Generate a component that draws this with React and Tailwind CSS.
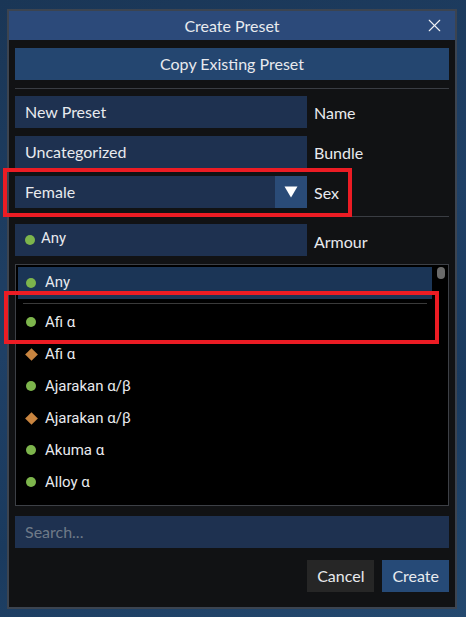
import { X } from "lucide-react";

const items = [
  { name: "Afi α", kind: "dot" },
  { name: "Afi α", kind: "diamond" },
  { name: "Ajarakan α/β", kind: "dot" },
  { name: "Ajarakan α/β", kind: "diamond" },
  { name: "Akuma α", kind: "dot" },
  { name: "Alloy α", kind: "dot" },
];

function Marker({ kind }) {
  if (kind === "diamond") {
    return (
      <span className="flex h-[10px] w-[10px] shrink-0 items-center justify-center">
        <span className="h-[9px] w-[9px] shrink-0 rotate-45 bg-[#c98540]" />
      </span>
    );
  }
  return <span className="h-[10px] w-[10px] shrink-0 rounded-full bg-[#7db54c]" />;
}

function Field({ label, children }) {
  return (
    <div className="flex items-center gap-[7px]">
      <div className="flex h-8 w-[292px] items-center bg-[#1e3150] px-[10px]">{children}</div>
      <span className="pt-[2px]">{label}</span>
    </div>
  );
}

export default function App() {
  return (
    <div
      className="relative h-[617px] w-[466px] overflow-hidden bg-[linear-gradient(160deg,#1a3656_0%,#1f4066_45%,#1a3a5e_70%,#24496f_100%)] pl-[7px] pt-[9px] text-[16px] text-[#e8eaee]"
      style={{ fontFamily: "Lato, 'Noto Sans', sans-serif" }}
    >
      <div className="flex w-[450px] flex-col border-2 border-[#3c4450] bg-[#111214]">
        {/* title bar */}
        <div className="relative flex h-[29px] items-center justify-center bg-[#2c4a7a]">
          <span>Create Preset</span>
          <X className="absolute right-[10px] top-[4px] h-[21px] w-[21px] text-[#eef0f3]" strokeWidth={1.3} />
        </div>

        <div className="flex flex-col px-[6px] pb-[15px] pt-[8px]">
          <div className="flex h-8 items-center justify-center bg-[#244670]">Copy Existing Preset</div>
          <div className="mt-2 h-px bg-[#3a3d43]" />

          <div className="mt-[7px] flex flex-col gap-2">
            <Field label="Name">New Preset</Field>
            <Field label="Bundle">Uncategorized</Field>
            <div className="flex items-center gap-[7px]">
              <div className="flex h-8 w-[292px] items-center bg-[#1e3150]">
                <span className="flex-1 px-[10px]">Female</span>
                <span className="flex h-8 w-8 items-center justify-center bg-[#2a4b77]">
                  <svg width="14" height="12" viewBox="0 0 14 12">
                    <path d="M0.5 0.5 H13.5 L7 11.5 Z" fill="#ffffff" />
                  </svg>
                </span>
              </div>
              <span className="pt-[2px]">Sex</span>
            </div>
          </div>

          <div className="mt-2 h-px bg-[#3a3d43]" />

          <div className="mt-[7px]">
            <div className="flex items-center gap-[7px]">
              <div
                className="flex h-8 w-[292px] items-center gap-[6px] bg-[#1e3150] px-[10px] text-[15px]"
                style={{ fontFamily: "Roboto, sans-serif" }}
              >
                <Marker kind="dot" />
                <span className="-mt-[4px]">Any</span>
              </div>
              <span className="pt-[4px]">Armour</span>
            </div>
          </div>

          {/* list */}
          <div
            className="relative mt-2 h-[242px] overflow-hidden border border-[#3d4046] bg-black p-[2px] text-[15px]"
            style={{ fontFamily: "Roboto, sans-serif" }}
          >
            <div className="flex h-8 w-[414px] items-center gap-[9px] bg-[#1b3556] pl-2">
              <Marker kind="dot" />
              <span className="-mt-[2px]">Any</span>
            </div>
            <div className="ml-[5px] mt-[4px] h-px w-[404px] bg-[#3a3a3a]" />
            <div className="mt-[2px] flex flex-col">
              {items.map((it, i) => (
                <div key={i} className="flex h-8 w-[414px] items-center gap-[9px] pl-2">
                  <Marker kind={it.kind} />
                  <span>{it.name}</span>
                </div>
              ))}
            </div>
            <div className="absolute right-[3px] top-[2px] h-3 w-2 rounded-full bg-[#6a6a6a]" />
          </div>

          <div className="mt-[10px] flex h-8 items-center bg-[#1e3150] px-[10px] text-[#6f7a88]">Search...</div>

          <div className="mt-3 flex justify-end gap-2">
            <button className="h-8 bg-[#262626] px-[10px]">Cancel</button>
            <button className="h-8 bg-[#264a77] px-[10px]">Create</button>
          </div>
        </div>
      </div>

      {/* highlight boxes */}
      <div className="absolute left-[3px] top-[168px] h-[49px] w-[349px] border-4 border-[#ec1c24]" />
      <div className="absolute left-[4px] top-[291px] h-[53px] w-[435px] border-4 border-[#ec1c24]" />
    </div>
  );
}
